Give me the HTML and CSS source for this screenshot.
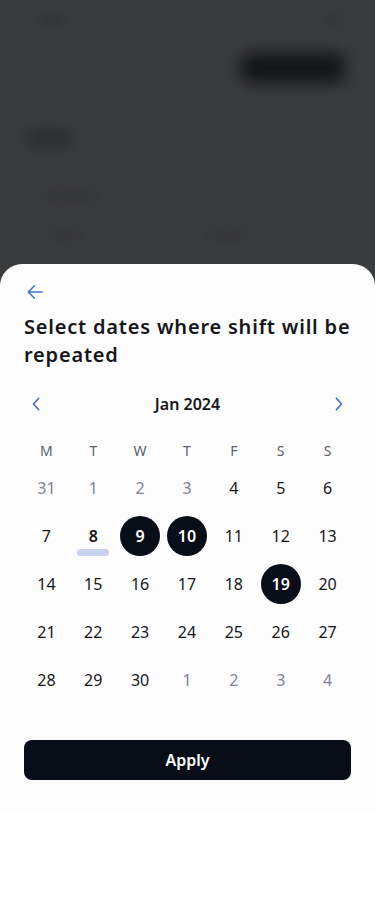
FILE: index.html
```html
<!DOCTYPE html>
<html lang="en">
<head>
<meta charset="utf-8">
<title>Select dates</title>
<link rel="stylesheet" href="styles.css">
</head>
<body>
<div class="page">
  <div class="backdrop" aria-hidden="true">
    <div class="bd-blur">
      <div class="bd-row bd-top">
        <span class="blob blob-a"></span>
        <span class="blob blob-b"></span>
      </div>
      <div class="bd-row bd-action">
        <span class="bd-btn"></span>
      </div>
      <div class="bd-row bd-head">
        <span class="blob blob-c"></span>
      </div>
      <div class="bd-row bd-line">
        <span class="blob blob-d"></span>
      </div>
      <div class="bd-row bd-line2">
        <span class="blob blob-e"></span>
        <span class="blob blob-f"></span>
      </div>
    </div>
  </div>

  <section class="sheet">
    <button class="back" aria-label="Back">
      <svg width="20" height="20" viewBox="0 0 20 20" fill="none" stroke="#4a72c4" stroke-width="1.6" stroke-linecap="round" stroke-linejoin="round"><path d="M17 10H3.5M9.5 3.8 3.3 10l6.2 6.2"/></svg>
    </button>
    <h1 class="title">Select dates where shift will be repeated</h1>

    <div class="month-nav">
      <button class="nav-btn" aria-label="Previous month">
        <svg width="12" height="16" viewBox="0 0 12 16" fill="none" stroke="#4a72c4" stroke-width="1.8" stroke-linecap="round" stroke-linejoin="round"><path d="M8.5 2.5 3.5 8l5 5.5"/></svg>
      </button>
      <span class="month">Jan 2024</span>
      <button class="nav-btn" aria-label="Next month">
        <svg width="12" height="16" viewBox="0 0 12 16" fill="none" stroke="#4a72c4" stroke-width="1.8" stroke-linecap="round" stroke-linejoin="round"><path d="M3.5 2.5 8.5 8l-5 5.5"/></svg>
      </button>
    </div>

    <div class="grid weekdays">
      <span>M</span><span>T</span><span>W</span><span>T</span><span>F</span><span>S</span><span>S</span>
    </div>

    <div class="grid days">
      <span class="day out">31</span><span class="day out">1</span><span class="day out">2</span><span class="day out">3</span><span class="day">4</span><span class="day">5</span><span class="day">6</span>
      <span class="day">7</span><span class="day today">8</span><span class="day sel">9</span><span class="day sel">10</span><span class="day">11</span><span class="day">12</span><span class="day">13</span>
      <span class="day">14</span><span class="day">15</span><span class="day">16</span><span class="day">17</span><span class="day">18</span><span class="day sel">19</span><span class="day">20</span>
      <span class="day">21</span><span class="day">22</span><span class="day">23</span><span class="day">24</span><span class="day">25</span><span class="day">26</span><span class="day">27</span>
      <span class="day">28</span><span class="day">29</span><span class="day">30</span><span class="day out">1</span><span class="day out">2</span><span class="day out">3</span><span class="day out">4</span>
    </div>

    <button class="apply">Apply</button>
  </section>
</div>
</body>
</html>
```

FILE: styles.css
```css
* { box-sizing: border-box; }

html, body {
  margin: 0;
  padding: 0;
  background: #ffffff;
}

body {
  font-family: "Noto Sans", "Open Sans", "Liberation Sans", sans-serif;
  color: #15171b;
  width: 375px;
  height: 900px;
  overflow: hidden;
}

button {
  font: inherit;
  background: none;
  border: 0;
  padding: 0;
  margin: 0;
  cursor: pointer;
}

.page {
  background: #3a3b3d;
  display: flex;
  flex-direction: column;
}

/* blurred page behind the sheet */
.backdrop {
  height: 264px;
  overflow: hidden;
}

.bd-blur {
  filter: blur(8px);
  display: flex;
  flex-direction: column;
  padding: 0 22px;
}

.bd-row {
  display: flex;
  align-items: center;
}

.bd-top {
  height: 40px;
  justify-content: space-between;
  padding: 0 8px 0 16px;
}

.blob {
  display: block;
  background: #2e2f31;
  border-radius: 6px;
}

.blob-a { width: 26px; height: 10px; }
.blob-b { width: 24px; height: 10px; background: #303133; }

.bd-action {
  height: 56px;
  justify-content: flex-end;
  padding-right: 8px;
}

.bd-btn {
  display: block;
  width: 104px;
  height: 30px;
  border-radius: 8px;
  background: #141517;
}

.bd-head {
  height: 84px;
  padding-left: 4px;
}

.blob-c { width: 46px; height: 16px; background: #2a2b2d; }

.bd-line {
  height: 32px;
  padding-left: 18px;
}

.blob-d { width: 58px; height: 10px; background: #313234; }

.bd-line2 {
  height: 44px;
  padding-left: 26px;
  gap: 120px;
}

.blob-e { width: 36px; height: 10px; background: #313234; }
.blob-f { width: 44px; height: 10px; background: #313234; }

/* sheet */
.sheet {
  background: #fcfcfc;
  border-radius: 22px 22px 0 0;
  padding: 18px 24px 32px;
  display: flex;
  flex-direction: column;
}

.back {
  width: 24px;
  height: 20px;
  display: flex;
  align-items: center;
  justify-content: flex-start;
  margin-left: 1px;
}

.title {
  margin: 11px 0 0;
  font-size: 20px;
  line-height: 28px;
  font-weight: 600;
  letter-spacing: 0.8px;
  color: #15171b;
}

.month-nav {
  margin-top: 23px;
  height: 24px;
  display: flex;
  align-items: center;
  justify-content: space-between;
  padding: 0 6px 0 6px;
}

.nav-btn {
  width: 12px;
  height: 16px;
  display: flex;
}

.month {
  font-size: 16px;
  font-weight: 600;
  color: #15171b;
}

.grid {
  display: grid;
  grid-template-columns: repeat(7, 1fr);
  margin: 0 0 0 -1px;
}

.weekdays {
  margin-top: 20px;
  height: 28px;
  align-items: center;
}

.weekdays span {
  text-align: center;
  font-size: 14px;
  color: #5b616d;
}

.days {
  grid-auto-rows: 48px;
}

.day {
  position: relative;
  display: flex;
  align-items: center;
  justify-content: center;
  font-size: 16px;
  color: #15171b;
}

.day.out {
  color: #7d8593;
}

.day.today {
  font-weight: 600;
}

.day.today::after {
  content: "";
  position: absolute;
  left: 50%;
  bottom: 4px;
  width: 32px;
  height: 7px;
  margin-left: -16px;
  border-radius: 4px;
  background: #c8d3ec;
}

.day.sel::before {
  content: "";
  position: absolute;
  left: 50%;
  top: 50%;
  width: 40px;
  height: 40px;
  margin: -20px 0 0 -20px;
  border-radius: 50%;
  background: #080d17;
  z-index: -1;
}

.day.sel {
  color: #ffffff;
  font-weight: 600;
  isolation: isolate;
}

.apply {
  margin-top: 36px;
  height: 40px;
  border-radius: 8px;
  background: #080d17;
  color: #ffffff;
  font-size: 16px;
  font-weight: 600;
}
```
